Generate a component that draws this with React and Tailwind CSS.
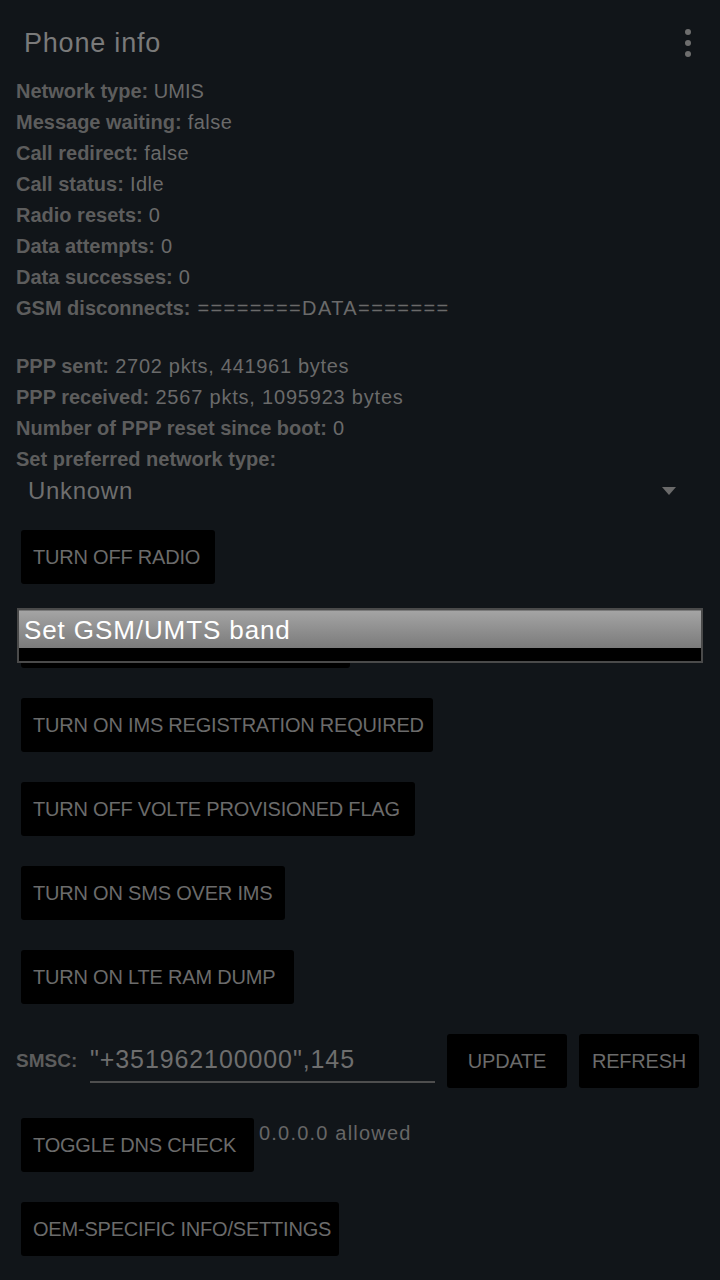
import React from "react";

const font = { fontFamily: '"Liberation Sans", Arial, sans-serif' };

function Info({ label, value, vcls = "tracking-[0.5px]" }) {
  return (
    <div className="leading-[31px] text-[20px] whitespace-nowrap">
      <span className="font-bold text-[#5d5d5d]">{label}</span>
      <span className={"text-[#6a6a6a] " + vcls}> {value}</span>
    </div>
  );
}

function Btn({ children, className = "" }) {
  return (
    <div
      className={
        "h-[54px] bg-black rounded-[3px] flex items-center px-[12px] text-[20px] tracking-[-0.2px] text-[#6b6b6b] whitespace-nowrap " +
        className
      }
    >
      {children}
    </div>
  );
}

export default function App() {
  return (
    <div className="w-[720px] h-[1280px] bg-[#111519] overflow-hidden" style={font}>
      {/* header */}
      <div className="h-[76px] flex items-start justify-between">
        <div className="pl-[24px] pt-[26px] leading-[34px] text-[27px] tracking-[0.8px] text-[#7a7a7a]">Phone info</div>
        <div className="pt-[29px] pr-[29px] flex flex-col gap-[5px]">
          <div className="w-[6px] h-[6px] rounded-full bg-[#6e6e6e]" />
          <div className="w-[6px] h-[6px] rounded-full bg-[#6e6e6e]" />
          <div className="w-[6px] h-[6px] rounded-full bg-[#6e6e6e]" />
        </div>
      </div>

      <div className="pl-[16px]">
        <Info label="Network type:" value="UMIS" vcls="" />
        <Info label="Message waiting:" value="false" />
        <Info label="Call redirect:" value="false" />
        <Info label="Call status:" value="Idle" />
        <Info label="Radio resets:" value="0" />
        <Info label="Data attempts:" value="0" />
        <Info label="Data successes:" value="0" />
        <Info label="GSM disconnects:" value="========DATA=======" vcls="tracking-[1.4px]" />
        <div className="mt-[27px]" />
        <Info label="PPP sent:" value="2702 pkts, 441961 bytes" vcls="tracking-[0.7px]" />
        <Info label="PPP received:" value="2567 pkts, 1095923 bytes" vcls="tracking-[0.8px]" />
        <Info label="Number of PPP reset since boot:" value="0" />
        <div className="leading-[31px] text-[20px] font-bold text-[#5d5d5d]">Set preferred network type:</div>
      </div>

      {/* spinner */}
      <div className="h-[32px] flex items-center justify-between pl-[28px] pr-[44px]">
        <span className="text-[24px] tracking-[0.7px] text-[#6e6e6e]">Unknown</span>
        <svg width="14" height="8" viewBox="0 0 14 8">
          <path d="M0 0 L14 0 L7 8 Z" fill="#6a6a6a" />
        </svg>
      </div>

      <div className="mt-[23px] flex flex-col gap-[30px] pl-[21px]">
        <div className="flex">
          <Btn className="w-[194px]">TURN OFF RADIO</Btn>
        </div>
        <div className="flex relative">
          <Btn className="w-[329px]" />
          <div className="absolute left-[-4px] top-[-6px] w-[686px] h-[55px] border-2 border-[#4a4a4a] bg-black flex flex-col">
            <div className="h-[38px] border-t border-[#7a7a7a] bg-gradient-to-b from-[#a4a4a4] to-[#7b7b7b] flex items-center pl-[5px]">
              <span className="text-[26px] text-white tracking-[0.9px] leading-none">Set GSM/UMTS band</span>
            </div>
          </div>
        </div>
        <div className="flex">
          <Btn className="w-[412px]">TURN ON IMS REGISTRATION REQUIRED</Btn>
        </div>
        <div className="flex">
          <Btn className="w-[394px]">TURN OFF VOLTE PROVISIONED FLAG</Btn>
        </div>
        <div className="flex">
          <Btn className="w-[264px]">TURN ON SMS OVER IMS</Btn>
        </div>
        <div className="flex">
          <Btn className="w-[273px]">TURN ON LTE RAM DUMP</Btn>
        </div>
      </div>

      {/* SMSC row */}
      <div className="mt-[30px] h-[54px] flex items-center pl-[16px]">
        <span className="w-[74px] font-bold text-[19px] text-[#5d5d5d]">SMSC:</span>
        <div className="w-[345px] h-[44px] flex items-center border-b-2 border-[#4e4e4e]">
          <span className="text-[25px] tracking-[0.9px] text-[#6e6e6e] whitespace-nowrap">"+351962100000",145</span>
        </div>
        <div className="ml-[12px] flex gap-[12px]">
          <Btn className="w-[120px] justify-center px-0">UPDATE</Btn>
          <Btn className="w-[120px] justify-center px-0">REFRESH</Btn>
        </div>
      </div>

      <div className="mt-[30px] flex flex-col gap-[30px] pl-[21px]">
        <div className="flex items-start">
          <Btn className="w-[233px]">TOGGLE DNS CHECK</Btn>
          <span className="ml-[5px] mt-[2px] text-[20px] tracking-[1.2px] text-[#666] leading-[26px]">0.0.0.0 allowed</span>
        </div>
        <div className="flex">
          <Btn className="w-[318px]">OEM-SPECIFIC INFO/SETTINGS</Btn>
        </div>
      </div>
    </div>
  );
}
